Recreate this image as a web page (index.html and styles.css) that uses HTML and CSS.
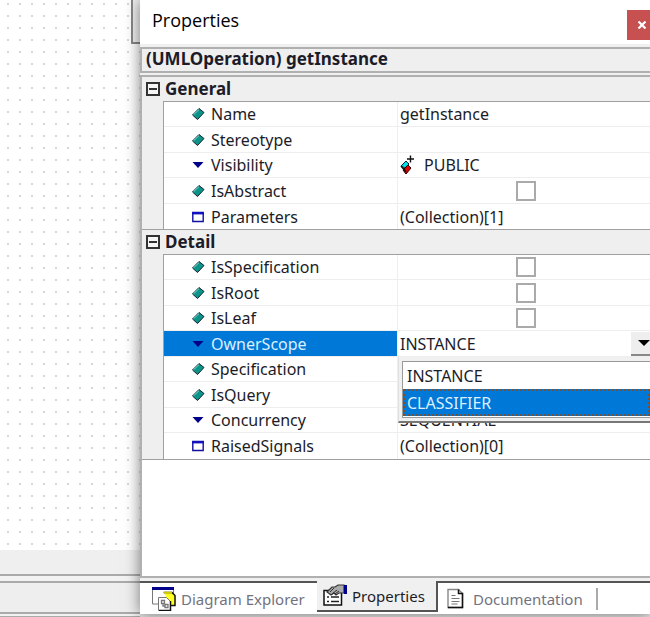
FILE: index.html
```html
<!DOCTYPE html>
<html lang="en">
<head>
<meta charset="utf-8">
<title>Properties</title>
<link rel="stylesheet" href="styles.css">
</head>
<body>
<svg class="defs" aria-hidden="true">
  <symbol id="attr" viewBox="0 0 14 14">
    <path d="M1.500 8 8 1.500 13 5.500 6.500 12.500Z" fill="#0d9488" stroke="#123" stroke-width="1"/>
    <path d="M2.500 7.800 8 2.600" stroke="#7fe0d8" stroke-width="1"/>
  </symbol>
  <symbol id="enum" viewBox="0 0 14 14"><path d="M1.500 4h11L7 10Z" fill="#00008b"/></symbol>
  <symbol id="coll" viewBox="0 0 14 14">
    <path d="M1.800 2.500h10.400v9H1.800Z" fill="#fff" stroke="#1010a0" stroke-width="1.400"/><path d="M1 3.200h12" stroke="#1010c0" stroke-width="2.400"/>
  </symbol>
</svg>
<div class="desktop">
  <div class="workspace">
    <div class="canvas"></div>
    <div class="splitter"></div>
    <div class="dock"></div>
    <div class="status"></div>
    <div class="corner"></div>
  </div>
  <main class="panel">
    <header class="titlebar">
      <h1>Properties</h1>
      <button class="close" aria-label="Close"><svg viewBox="0 0 10 8"><path d="M1.500.5 8.500 7.500M8.500.5 1.500 7.500" stroke="#fff" stroke-width="2.200"/></svg></button>
    </header>
    <div class="subject">(UMLOperation) getInstance</div>
    <div class="inspector">
      <section>
        <h2><button class="toggle" aria-label="Collapse General"></button>General</h2>
        <table>
          <tr><th><svg><use href="#attr"/></svg>Name</th><td>getInstance</td></tr>
          <tr><th><svg><use href="#attr"/></svg>Stereotype</th><td></td></tr>
          <tr><th><svg><use href="#enum"/></svg>Visibility</th><td><svg class="public" viewBox="0 0 16 20"><path d="M1 11 6 6 9 9 5 13Z" fill="#00dce8" stroke="#123" stroke-width="1"/><path d="M3 15 8 10 11 13 6 19Z" fill="#e00000" stroke="#200" stroke-width="1"/><path d="M1 11 6 17" stroke="#111" stroke-width="1.500"/><path d="M7 4h7M10.500.5v7" stroke="#111" stroke-width="1.400"/></svg>PUBLIC</td></tr>
          <tr><th><svg><use href="#attr"/></svg><label for="abstract">IsAbstract</label></th><td class="check"><input type="checkbox" id="abstract"></td></tr>
          <tr><th><svg><use href="#coll"/></svg>Parameters</th><td>(Collection)[1]</td></tr>
        </table>
      </section>
      <section>
        <h2><button class="toggle" aria-label="Collapse Detail"></button>Detail</h2>
        <table>
          <tr><th><svg><use href="#attr"/></svg><label for="spec">IsSpecification</label></th><td class="check"><input type="checkbox" id="spec"></td></tr>
          <tr><th><svg><use href="#attr"/></svg><label for="root">IsRoot</label></th><td class="check"><input type="checkbox" id="root"></td></tr>
          <tr><th><svg><use href="#attr"/></svg><label for="leaf">IsLeaf</label></th><td class="check"><input type="checkbox" id="leaf"></td></tr>
          <tr class="selected"><th><svg><use href="#enum"/></svg><label for="scope">OwnerScope</label></th><td>
            <div class="combo">
              <input type="text" id="scope" value="INSTANCE">
              <button aria-label="Open list"><svg viewBox="0 0 12 6"><path d="M0 0h12L6 6Z"/></svg></button>
              <div class="popup"><select size="2" aria-label="OwnerScope values"><option>INSTANCE</option><option selected>CLASSIFIER</option></select></div>
            </div></td></tr>
          <tr><th><svg><use href="#attr"/></svg>Specification</th><td></td></tr>
          <tr><th><svg><use href="#attr"/></svg>IsQuery</th><td></td></tr>
          <tr><th><svg><use href="#enum"/></svg>Concurrency</th><td>SEQUENTIAL</td></tr>
          <tr><th><svg><use href="#coll"/></svg>RaisedSignals</th><td>(Collection)[0]</td></tr>
        </table>
      </section>
    </div>
    <nav class="tabs">
      <button class="tab explorer"><svg viewBox="0 0 24 24">
        <path d="M.5 1v16H7M21.500 1v7" fill="none" stroke="#777"/><path d="M0 1.500h22" stroke="#00008b" stroke-width="3"/>
        <path d="M12 5.500h8l3 3v10h-5" fill="#ffff20" stroke="#111" stroke-width="1.500"/><path d="M11 5.500h9" stroke="#cc0" stroke-width="1.500"/>
        <path d="M6.500 10.500h8l4 4v9H6.500Z" fill="#fff" stroke="#777"/><path d="M18.500 14v9.500H7" fill="none" stroke="#111" stroke-width="1.500"/>
        <path d="M9.500 13.500h3v3h-3ZM13 17.500h3v3h-3ZM11 16v3h2" fill="none" stroke="#777" stroke-width="1.300"/></svg>Diagram Explorer</button>
      <button class="tab active"><svg viewBox="0 0 24 24">
        <path d="M1 6.500h17.500V21H1Z" fill="#fff" stroke="#111" stroke-width="1.500"/><path d="M4 13h2M8 13h8M4 17.500h2M8 17.500h8" stroke="#222" stroke-width="1.600"/>
        <path d="M4 8 9 3h3l3-2h6v8h-5l-3 2-2-2-3 2Z" fill="#aaa" stroke="#333" stroke-width="1.200"/><path d="M7 8 11 4M9 10l5-4M12 10l4-3" stroke="#333"/><path d="M22.500 1v9" stroke="#00008b" stroke-width="3"/></svg>Properties</button>
      <button class="tab document"><svg viewBox="0 0 24 24">
        <path d="M4 2.500h10.500l4 4v14H4Z" fill="#fff" stroke="#888" stroke-width="1.400"/><path d="M14.500 2.500v4h4v14H4" fill="none" stroke="#111" stroke-width="1.500"/><path d="M7.500 8.500h4M7.500 11.500h8M7.500 14.500h8M7.500 17h6" stroke="#777"/></svg>Documentation</button>
    </nav>
  </main>
</div>
</body>
</html>
```
FILE: styles.css
```css
* { box-sizing: border-box; }
body { margin: 0; background: #e4e4e4; color: #1c1c28; font: 16px/20px "Noto Sans", sans-serif; overflow: hidden; }
button, input, select { font: inherit; color: inherit; margin: 0; padding: 0; }
.defs { position: absolute; width: 0; height: 0; }
.desktop { display: flex; min-height: 100vh; }

.workspace { position: relative; width: 140px; flex: none; display: flex; flex-direction: column; background: #f2f2f2; }
.canvas { flex: 1; background: #fff radial-gradient(circle at 8px 4px, #d6d6d6 1px, transparent 1px) 0 0 / 12px 12px; }
.splitter { height: 26px; background: #efefef; border-bottom: 2px solid #aaa; }
.dock { height: 33px; margin: 5px 0 2px; background: #eee; border: solid #aaa; border-width: 2px 0; }
.status { border-top: 1px solid #aaa; }
.corner { position: absolute; right: 0; top: 0; width: 9px; height: 44px; background: #f0f0f0; border: solid #888; border-width: 0 0 2px 2px; }

.panel { position: relative; flex: 1; min-width: 0; display: flex; flex-direction: column; margin-bottom: 3px; background: #f0f0f0; box-shadow: 0 0 14px rgba(0, 0, 0, .5); }
.titlebar { display: flex; justify-content: space-between; align-items: center; height: 44px; padding-left: 12px; background: #fff; margin-bottom: 3px; }
h1 { margin: 0; font: 18px/24px "Open Sans", sans-serif; color: #000; padding-bottom: 4px; }
.close { width: 23px; height: 30px; padding-left: 10px; border: 0; background: #c75050; margin-top: 6px; }
.close svg { display: block; width: 10px; height: 8px; }
.subject { height: 26px; padding-left: 4px; border: 2px solid #b0b0b0; border-right: 0; background: #efefef; font-size: 17px; font-weight: 700; line-height: 20px; margin-bottom: 2px; }

.inspector { flex: 1; border: 2px solid #b0b0b0; border-right: 0; background: #fff; }
section { background: #efefef; border-bottom: 1px solid #a0a0a0; }
h2 { display: flex; align-items: center; gap: 5px; height: 24px; margin: 0; padding-left: 4px; font-size: 17px; line-height: 22px; }
.toggle { width: 14px; height: 14px; border: 2px solid #333; background: #f6f6f6; }
.toggle::before { content: ""; display: block; height: 2px; margin: 0 1px; background: #333; }
table { display: block; margin-left: 21px; border: solid #a0a0a0; border-width: 1px 0 0 1px; background: #fff; }
tbody { display: block; }
tr { display: flex; height: 25px; border-bottom: 1px solid #eee; }
tr:nth-child(even) { height: 26px; }
tr:last-child { border-bottom: 0; }
th { display: flex; align-items: center; gap: 6px; width: 234px; padding-left: 27px; border-right: 1px solid #eee; font-weight: 400; }
th svg { width: 14px; height: 14px; }
td { display: flex; align-items: center; flex: 1; min-width: 0; padding: 0 0 0 2px; }
.public { width: 16px; height: 20px; margin-right: 8px; }
.check { justify-content: center; padding-left: 4px; }
.check input { appearance: none; width: 20px; height: 20px; border: 2px solid #aaa; background: #fff; }
.selected th { background: #0078d7; color: #dcefff; }

.combo { position: relative; display: flex; flex: 1; min-width: 0; height: 24px; }
.combo input { flex: 1; min-width: 0; border: 0; background: #fff; outline: 0; }
.combo button { width: 19px; padding-left: 7px; border: 0; border-bottom: 2px solid #888; background: #eee; }
.combo button svg { display: block; width: 12px; height: 6px; }
.popup { position: absolute; z-index: 1; top: 25px; left: -2px; right: 0; padding: 4px 0 3px 3px; background: #f0f0f0; border-bottom: 2px solid #777; border-left: 1px solid #e0e0e0; }
.popup select { display: block; width: 100%; height: 57px; border: 1px solid #999; border-right: 0; border-radius: 0; background: #fff; overflow: hidden; outline: 0; scrollbar-width: none; }
.popup option { height: 27px; min-height: 27px; padding: 3px 4px; line-height: 21px; color: #1c1c28; }
.popup option:checked { background: #0078d7 linear-gradient(#0078d7, #0078d7); color: #dcefff; outline: 2px dotted #7a5030; outline-offset: -2px; }

.tabs { display: flex; height: 33px; margin-top: 3px; background: #fff; }
.tab { display: flex; align-items: center; gap: 5px; border: 0; border-top: 2px solid #555; background: #fff; color: #737380; font-size: 15px; white-space: nowrap; }
.tab svg { width: 24px; height: 24px; flex: none; }
.explorer { width: 177px; padding-left: 12px; }
.active { width: 121px; height: 31px; padding-left: 6px; border: solid #555; border-width: 0 2px 2px 0; background: #f0f0f0; color: #1c1c28; }
.document { flex: 1; padding-left: 6px; }
.document::after { content: ""; width: 2px; height: 22px; margin-left: 8px; background: #aaa; }
```
